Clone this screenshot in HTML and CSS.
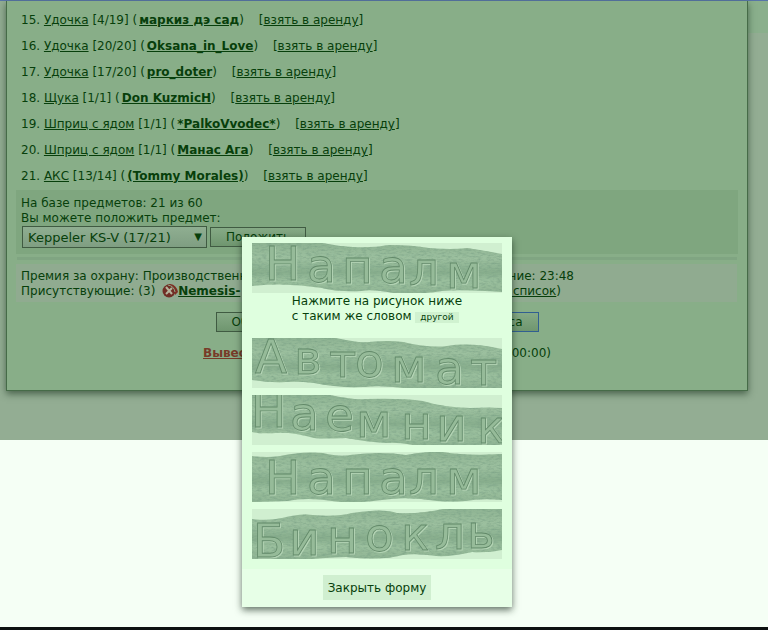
FILE: index.html
```html
<!DOCTYPE html>
<html lang="ru">
<head>
<meta charset="utf-8">
<title>База предметов</title>
<link rel="stylesheet" href="styles.css">
</head>
<body>
<div class="page">
  <main class="panel">
    <ol class="items" start="15">
      <li>15. <a href="#">Удочка</a> [4/19] (<a class="owner" href="#">маркиз дэ сад</a>) <span class="rent">[<a href="#">взять в аренду</a>]</span></li>
      <li>16. <a href="#">Удочка</a> [20/20] (<a class="owner" href="#">Oksana_in_Love</a>) <span class="rent">[<a href="#">взять в аренду</a>]</span></li>
      <li>17. <a href="#">Удочка</a> [17/20] (<a class="owner" href="#">pro_doter</a>) <span class="rent">[<a href="#">взять в аренду</a>]</span></li>
      <li>18. <a href="#">Щука</a> [1/1] (<a class="owner" href="#">Don KuzmicH</a>) <span class="rent">[<a href="#">взять в аренду</a>]</span></li>
      <li>19. <a href="#">Шприц с ядом</a> [1/1] (<a class="owner" href="#">*PalkoVvodec*</a>) <span class="rent">[<a href="#">взять в аренду</a>]</span></li>
      <li>20. <a href="#">Шприц с ядом</a> [1/1] (<a class="owner" href="#">Манас Ага</a>) <span class="rent">[<a href="#">взять в аренду</a>]</span></li>
      <li>21. <a href="#">АКС</a> [13/14] (<a class="owner" href="#">(Tommy Morales)</a>) <span class="rent">[<a href="#">взять в аренду</a>]</span></li>
    </ol>
    <section class="deposit">
      <div>На базе предметов: 21 из 60</div>
      <label for="item">Вы можете положить предмет:</label>
      <div class="deposit-row">
        <span class="select"><select id="item"><option>Keppeler KS-V (17/21)</option></select></span>
        <button class="btn" type="button">Положить</button>
      </div>
    </section>
    <div class="rule"></div>
    <section class="status">
      <div class="line bonus"><span>Премия за охрану: Производственная</span><span>Обновление: 23:48</span></div>
      <div class="line present"><span>Присутствующие: (3)
        <svg class="badge" viewBox="0 0 16 14" aria-hidden="true"><circle cx="7" cy="7" r="6.5" fill="#702e25"/><path d="M5 0Q14-1 16 8L13 11Q13 4 5 0" fill="#7d2f25"/><path d="M6 1Q12 2 13 8" fill="none" stroke="#8cab89"/><path d="M4 3l6 7M10 4l-6 6" stroke="#b5b39b" stroke-width="2"/></svg><a class="owner" href="#">Nemesis-</a></span><span>(<a href="#">весь список</a>)</span></div>
    </section>
    <div class="actions">
      <button class="btn" type="button">Обновить</button>
      <button class="btn focus" type="button">Выйти из офиса</button>
    </div>
    <div class="withdraw"><a href="#">Вывести</a><span>(00:00:00)</span></div>
  </main>

  <div class="dialog" role="dialog" aria-label="Проверка">
    <div class="captcha">
      <svg class="leather" viewBox="0 0 250 50" role="img">
        <defs>
          <linearGradient id="hide" x1="0" y1="0" x2="0" y2="1">
            <stop offset="0" stop-color="#8fb493"/><stop offset=".3" stop-color="#9cc09f"/>
            <stop offset=".58" stop-color="#88ae8d"/><stop offset=".75" stop-color="#9bc09e"/><stop offset="1" stop-color="#8fb493"/>
          </linearGradient>
          <filter id="grain" x="0" y="0" width="100%" height="100%">
            <feTurbulence type="fractalNoise" baseFrequency=".2 .6" numOctaves="3" seed="4" result="noise"/>
            <feColorMatrix in="noise" type="matrix" values="0 0 0 0 .2  0 0 0 0 .36  0 0 0 0 .24  1.6 0 0 0 -.65" result="dark"/>
            <feComposite in="dark" in2="SourceGraphic" operator="in" result="marks"/>
            <feMerge><feMergeNode in="SourceGraphic"/><feMergeNode in="marks"/></feMerge>
          </filter>
        </defs>
        <path class="hide" d="M0 0H70Q85 3 101 4Q121 5 137 2Q160 2 177 5Q200 7 215 5Q235 8 250 11V49Q210 46 190 48Q165 52 141 50Q120 46 110 48Q85 49 70 45Q35 39 0 43Z"/>
        <text x="13 55 90 127 157 194" y="37 39 40 40 42 45">Напалм</text>
      </svg>
      <div class="hint">
        <div>Нажмите на рисунок ниже<br>с таким же словом <button class="other" type="button">другой</button></div>
      </div>
      <div class="choices">
        <button type="button"><svg class="leather" viewBox="0 0 250 50">
          <path class="hide" d="M0 0H84Q105 5 117 4Q137 2 151 4Q177 10 195 8Q218 4 250 11V50H151Q130 47 111 49Q85 50 62 45Q45 43 34 44Q18 45 0 42Z"/>
          <text x="3 42 77 103 139 183 218" y="35 36 39 39 44 46 47">Автомат</text></svg></button>
        <button type="button"><svg class="leather" viewBox="0 0 250 50">
          <path class="hide" d="M0 0H78Q100 5 115 4Q150 3 171 6Q190 12 218 13Q235 12 250 13V50H161Q145 47 134 48Q115 47 94 43Q70 44 62 43Q40 37 24 38Q8 39 0 37Z"/>
          <text x="-1 38 73 104 149 184 225" y="32 35 36 42 44 46 48">Наемник</text></svg></button>
        <button type="button"><svg class="leather" viewBox="0 0 250 50">
          <path class="hide" d="M0 4Q15 6 28 4Q50-1 71 1Q88 5 98 3Q130-1 154 3Q175-1 191 0Q215 4 250 2V48Q230 46 213 49Q200 50 185 49Q155 44 130 48Q100 52 80 49Q55 45 35 49L0 50Z"/>
          <text x="13 55 90 127 157 194" y="42 42 42 42 42 42">Напалм</text></svg></button>
        <button type="button"><svg class="leather" viewBox="0 0 250 50">
          <path class="hide" d="M0 10Q18 12 30 9Q48 4 61 6Q85 8 100 4Q132-1 145 4Q170 5 191 0H250V41Q237 44 220 43Q200 48 184 47Q163 44 151 46Q130 52 94 48Q70 49 60 50H0Z"/>
          <text x="1 37 75 113 149 183 215" y="48 46 44 42 41 40 39">Бинокль</text></svg></button>
      </div>
    </div>
    <div class="footer"><button class="close" type="button">Закрыть форму</button></div>
  </div>
</div>
</body>
</html>
```
FILE: styles.css
```css
* { box-sizing: border-box; }
body {
  margin: 0;
  min-height: 100vh;
  border-bottom: 3px solid #0c1110;
  background: #f5fff5;
  color: #073f0b;
  font: 12px/15px "DejaVu Sans", sans-serif;
}
a { color: inherit; text-underline-offset: 1px; }
button, select { font: inherit; color: inherit; }
.page {
  position: relative;
  height: 440px;
  padding: 0 20px 0 6px;
  border-top: 1px solid #5875a8;
  background: linear-gradient(#8aaf8c, #8aaf8c) right top / 20px 32px no-repeat, #93ad93;
}
.panel {
  height: 390px;
  padding: 12px 9px 0;
  border: solid #466b48;
  border-width: 0 1px 1px;
  background: #88ae88;
  box-shadow: 0 3px 7px rgba(25, 50, 30, .6);
}
.items { margin: 0; padding: 0 5px; list-style: none; }
.items li { margin-bottom: 11px; }
.owner { margin-left: 2px; font-weight: bold; }
.rent { margin-left: 11px; }
.deposit { height: 64px; padding: 6px 5px 0; margin-top: -5px; background: #7fa67f; }
.deposit label { display: block; }
.deposit-row { display: flex; align-items: center; gap: 3px; margin: 0 1px; }
.select { position: relative; }
.select::after { content: "▼"; position: absolute; right: 5px; top: 3px; font-size: 10px; pointer-events: none; }
.select select {
  appearance: none;
  display: block;
  width: 185px;
  height: 22px;
  padding: 0 5px;
  border: 1px solid #405b42;
  border-radius: 0;
  background: linear-gradient(#8fae91, #7f9e82);
  font-size: 13px;
}
.btn {
  height: 20px;
  padding: 0 15px;
  border: 1px solid #405b42;
  background: linear-gradient(#86aa86, #6f966f);
}
.btn.focus { border-color: #315f91; }
.rule { height: 3px; margin: 3px 1px 4px; background: #80a582; }
.status { margin-right: 1px; padding: 5px 5px 3px; background: #90ab90; white-space: nowrap; }
.line { display: flex; justify-content: space-between; }
.bonus { max-width: 553px; }
.present { max-width: 540px; }
.badge { width: 16px; height: 14px; margin: 0 -2px -3px 3px; }
.actions { display: flex; justify-content: space-between; max-width: 323px; margin: 10px auto 0; }
.withdraw { display: flex; justify-content: space-between; max-width: 348px; margin: 14px auto; }
.withdraw a { color: #783b28; font-weight: bold; }
.dialog {
  position: absolute;
  top: 236px;
  left: calc(50% - 142px);
  width: 270px;
  background: #e7ffe7;
  box-shadow: 0 3px 7px rgba(20, 40, 25, .65);
}
.captcha { padding: 6px 10px 10px; background: #dfffdf; }
.leather { display: block; width: 250px; height: 50px; background: #d0efd0; }
.hide { fill: url(#hide); filter: url(#grain); }
.leather text {
  font: 47px "DejaVu Sans", sans-serif;
  fill: #96bb99;
  stroke: #628969;
  stroke-width: .8px;
  filter: drop-shadow(1px 1px 0 #b4d4b5);
}
.hint { display: flex; justify-content: center; height: 45px; padding-top: 1px; }
.other { padding: 0 5px; border: 0; background: #d0f2d0; font-size: 9px; line-height: 11px; }
.choices { display: grid; gap: 7px; }
.choices button { display: block; padding: 0; border: 0; background: none; }
.footer { display: flex; justify-content: center; padding: 6px 0 7px; }
.close { height: 25px; padding: 1px 5px 0; border: 0; background: #d0efd0; }
```
